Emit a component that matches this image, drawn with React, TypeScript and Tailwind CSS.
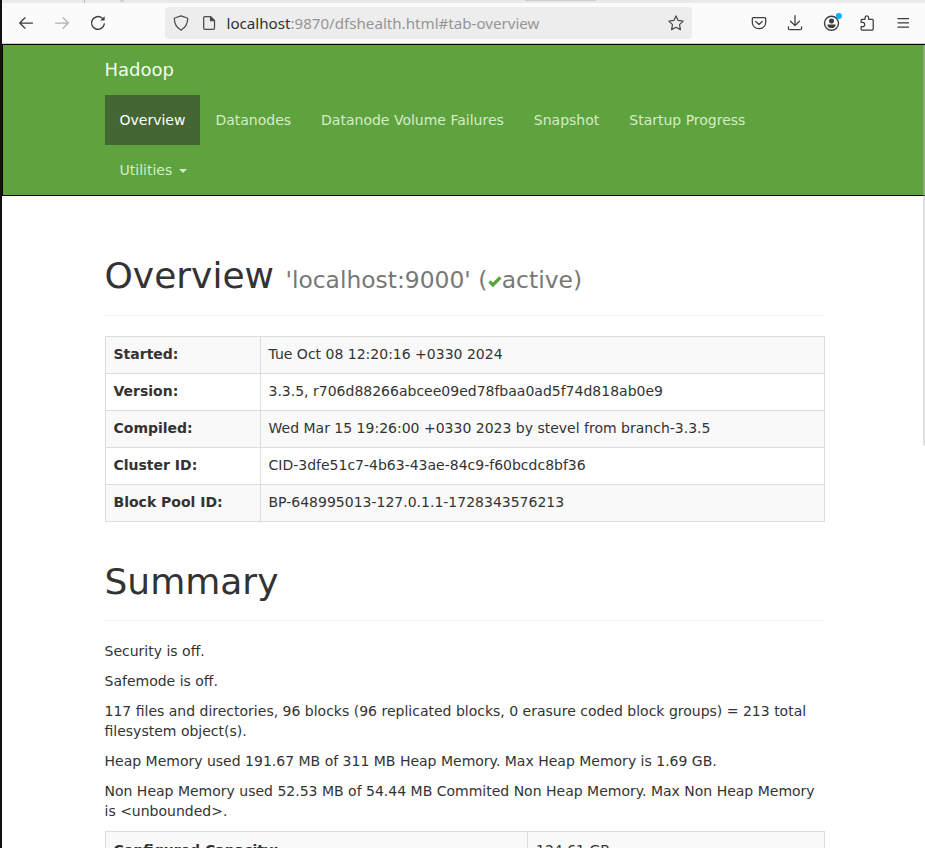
import type { ReactNode } from 'react';

const info: [string, string][] = [
  ['Started:', 'Tue Oct 08 12:20:16 +0330 2024'],
  ['Version:', '3.3.5, r706d88266abcee09ed78fbaa0ad5f74d818ab0e9'],
  ['Compiled:', 'Wed Mar 15 19:26:00 +0330 2023 by stevel from branch-3.3.5'],
  ['Cluster ID:', 'CID-3dfe51c7-4b63-43ae-84c9-f60bcdc8bf36'],
  ['Block Pool ID:', 'BP-648995013-127.0.1.1-1728343576213'],
];

const tabs = ['Overview', 'Datanodes', 'Datanode Volume Failures', 'Snapshot', 'Startup Progress'];

function Icon({ children, className = '' }: { children: ReactNode; className?: string }) {
  return (
    <svg
      viewBox="0 0 16 16"
      className={`size-4 shrink-0 overflow-visible ${className}`}
      fill="none"
      stroke="currentColor"
      strokeWidth="1.25"
      strokeLinecap="round"
      strokeLinejoin="round"
    >
      {children}
    </svg>
  );
}

function Toolbar() {
  return (
    <div className="flex h-[41px] items-center border-b border-[#cccccc] bg-[#fbfbfb] text-[#3d3d3d]">
      <Icon className="ml-4"><path d="M14.5 8H2M7 2.8 1.7 8 7 13.2" /></Icon>
      <Icon className="ml-5 text-[#b0b0b0]"><path d="M1.5 8H14M9 2.8 14.3 8 9 13.2" /></Icon>
      <Icon className="ml-5">
        <path d="M14.3 9A6.4 6.4 0 1 1 12 3" strokeWidth="1.4" />
        <path d="M14.6 1.2v4.4h-4.4z" fill="currentColor" stroke="none" />
      </Icon>
      <div className="ml-[59px] flex h-8 w-[527px] items-center rounded bg-[#ededed] pr-2 pl-2">
        <Icon className="text-[#4b4b4b]">
          <path d="M8 .8 14.3 3c.3 0 .4.3.4.6 0 4.7-2 8.9-6.7 11.6C3.3 12.500 1.300 8.300 1.300 3.600c0-.3.1-.6.4-.6z" />
        </Icon>
        <Icon className="ml-3 text-[#4b4b4b]">
          <path d="M4 1.600h5.500l4 4V13a1.300 1.300 0 0 1-1.300 1.300H4A1.300 1.300 0 0 1 2.700 13V2.900A1.300 1.300 0 0 1 4 1.600z" />
          <path d="M9.500 1.600v4h4z" fill="currentColor" />
        </Icon>
        <svg className="ml-[9px] h-8 w-[320px]" aria-label="Address">
          <text
            x="0.500"
            y="21.500"
            textLength="313"
            lengthAdjust="spacingAndGlyphs"
            className="font-['Noto_Sans',sans-serif] text-[15px]"
            fill="#959595"
          >
            <tspan fill="#303030">localhost</tspan>:9870/dfshealth.html#tab-overview
          </text>
        </svg>
        <Icon className="ml-auto text-[#4b4b4b]">
          <path d="m8 .9 2.100 4.500 5 .7-3.600 3.500.9 5L8 12.300l-4.400 2.300.9-5L.9 6.100l5-.7z" />
        </Icon>
      </div>
      <Icon className="ml-[59px]">
        <path d="M2.300 2.500h11.400c.7 0 1 .4 1 1v4a6.700 6.200 0 0 1-13.400 0v-4c0-.6.300-1 1-1z" />
        <path d="m4.800 6.500 3.200 3 3.200-3" />
      </Icon>
      <Icon className="ml-5">
        <path d="M8 .5v10M3.600 6.200 8 10.600l4.400-4.400M1.400 11.800v1.400c0 .9.5 1.400 1.400 1.400h10.400c.9 0 1.400-.5 1.400-1.400v-1.400" />
      </Icon>
      <Icon className="ml-5">
        <circle cx="8.500" cy="8.300" r="7" strokeWidth="1.400" />
        <circle cx="8.500" cy="6" r="2.500" fill="currentColor" stroke="none" />
        <path d="M4.300 9.400h8.400c0 2.300-1.800 3.700-4.200 3.700s-4.200-1.400-4.200-3.700z" fill="currentColor" stroke="none" />
        <circle cx="15.900" cy="1" r="3" fill="#00b0ff" stroke="none" />
      </Icon>
      <Icon className="ml-5">
        <path d="M2.100 7.300V5.200c0-.6.300-.9.900-.9h3V2.800c0-2.500 3.600-2.500 3.600 0v1.500h3.700c.5 0 .9.300.9.900v8.900c0 .5-.4.900-.9.900H3c-.6 0-.9-.4-.9-.9v-2.400h1.500c2.800 0 2.800-4.400 0-4.400z" />
      </Icon>
      <Icon className="ml-5"><path d="M2.500 3.500h11.500M2.500 7.800h11.500M2.500 12.100h11.500" strokeLinecap="butt" /></Icon>
    </div>
  );
}

function Navbar() {
  return (
    <nav className="h-[152px] border border-r-0 border-black bg-[#5fa33e] pl-[101.5px] text-[#d5ecc8]">
      <div className="h-[50px] pt-[15px] text-lg leading-5 text-[#f4faf0]">Hadoop</div>
      <ul className="flex w-[720px] flex-wrap">
        {tabs.map((tab, i) => (
          <li key={tab} className={i === 0 ? 'h-[50px] bg-[#446633] p-[15px] text-white' : 'h-[50px] p-[15px]'}>
            {tab}
          </li>
        ))}
        <li className="flex h-[50px] items-center p-[15px]">
          Utilities
          <span className="mt-0.5 ml-[6.5px] border-x-4 border-t-4 border-x-transparent border-t-[#d5ecc8]" />
        </li>
      </ul>
    </nav>
  );
}

function PageHeader({ children, className }: { children: ReactNode; className: string }) {
  return (
    <h1 className={`mb-5 border-b border-[#eeeeee] text-4xl leading-[39.6px] ${className}`}>
      {children}
    </h1>
  );
}

export default function App() {
  return (
    <div className="relative h-[848px] w-[925px] overflow-hidden border-l-2 border-[#111111] bg-white font-['DejaVu_Sans',sans-serif] text-sm leading-5 text-[#333333]">
      <div className="flex h-[3px] bg-[#eaeaea]">
        <span className="ml-[82px] w-px bg-[#b5b5b5]" />
        <span className="ml-[35px] h-0.5 w-1 rounded-b bg-[#cecece]" />
        <span className="ml-[401px] h-px w-[71px] bg-[#cccccc]" />
      </div>
      <Toolbar />
      <Navbar />
      <main className="ml-[102.5px] w-[720px]">
        <PageHeader className="mt-[60px] h-[60px]">
          Overview{' '}
          <small className="text-[23.4px] leading-none text-[#777777]">
            'localhost:9000' (
            <svg viewBox="0 0 14 14" className="mr-[0.5px] inline-block h-3.5 w-3.5 translate-x-px translate-y-px align-baseline" fill="#5fa341">
              <path d="M.3 7.600 2.600 5.300l2.300 2.300L11.100 1.300l2.500 2.300-8.300 8.500h-.9z" />
            </svg>
            active)
          </small>
        </PageHeader>
        <table className="w-full table-fixed border-collapse">
          <colgroup>
            <col className="w-[155px]" />
            <col />
          </colgroup>
          <tbody>
            {info.map(([label, value]) => (
              <tr key={label} className="h-[37px] odd:bg-[#f9f9f9]">
                <th className="border border-[#dddddd] px-2 pt-[6.5px] text-left align-top font-bold">{label}</th>
                <td className="border border-[#dddddd] px-2 pt-[6.5px] align-top">{value}</td>
              </tr>
            ))}
          </tbody>
        </table>
        <PageHeader className="mt-10 h-[59px]">Summary</PageHeader>
        <div className="flex flex-col gap-2.5">
          <p>Security is off.</p>
          <p>Safemode is off.</p>
          <p>117 files and directories, 96 blocks (96 replicated blocks, 0 erasure coded block groups) = 213 total filesystem object(s).</p>
          <p>Heap Memory used 191.67 MB of 311 MB Heap Memory. Max Heap Memory is 1.69 GB.</p>
          <p>Non Heap Memory used 52.53 MB of 54.44 MB Commited Non Heap Memory. Max Non Heap Memory is &lt;unbounded&gt;.</p>
        </div>
        <table className="mt-2.5 w-full table-fixed border-collapse">
          <colgroup>
            <col className="w-[422px]" />
            <col />
          </colgroup>
          <tbody>
            <tr className="h-[37px] bg-[#f9f9f9]">
              <th className="border border-[#dddddd] px-2 pt-[7.5px] text-left align-top font-bold">Configured Capacity:</th>
              <td className="border border-[#dddddd] pt-[7.5px] pr-2 pl-[8.5px] align-top">124.61 GB</td>
            </tr>
          </tbody>
        </table>
      </main>
      <div className="absolute top-[45px] right-0 h-[401px] w-0.5 rounded-b bg-[#bbbbbb]/45" />
    </div>
  );
}
